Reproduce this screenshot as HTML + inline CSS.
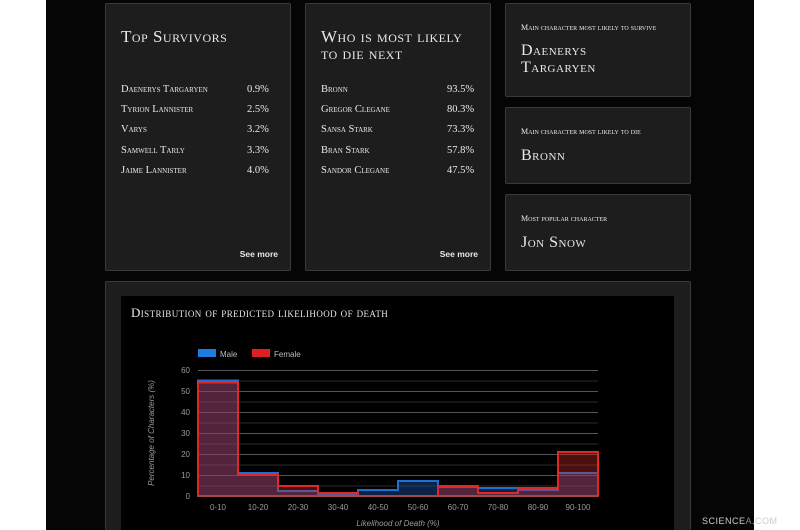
<!DOCTYPE html>
<html><head><style>
html,body{margin:0;width:800px;height:530px;overflow:hidden;}
body{background:#fff;position:relative;font-family:"Liberation Serif",serif;}
.page{position:absolute;left:46px;top:0;width:708px;height:530px;background:#050505;}
.card{position:absolute;background:#1d1d1d;border:1px solid #3a3a3a;border-radius:2px;color:#e8e8e8;box-sizing:border-box;}
h2{font-variant:small-caps;font-weight:normal;font-size:17px;margin:0;position:absolute;left:15px;top:24px;line-height:17px;letter-spacing:.5px;}
.row{position:absolute;left:15px;font-variant:small-caps;font-size:10.5px;width:150px;}
.row span{position:absolute;left:126px;}
.see{position:absolute;right:12px;bottom:11px;font-family:"Liberation Sans",sans-serif;font-weight:bold;font-size:8.5px;}
.sm{position:absolute;left:15px;font-variant:small-caps;font-size:8px;}
.big{position:absolute;left:15px;font-variant:small-caps;font-size:16px;line-height:17px;letter-spacing:.5px;}
</style></head><body>
<div class="page"></div>
<div class="card" style="left:105px;top:3px;width:186px;height:268px">
<h2>Top Survivors</h2>
<div class="row" style="top:80px">Daenerys Targaryen<span>0.9%</span></div>
<div class="row" style="top:100px">Tyrion Lannister<span>2.5%</span></div>
<div class="row" style="top:120px">Varys<span>3.2%</span></div>
<div class="row" style="top:141px">Samwell Tarly<span>3.3%</span></div>
<div class="row" style="top:161px">Jaime Lannister<span>4.0%</span></div>
<div class="see">See more</div></div>
<div class="card" style="left:305px;top:3px;width:186px;height:268px">
<h2>Who is most likely<br>to die next</h2>
<div class="row" style="top:80px">Bronn<span>93.5%</span></div>
<div class="row" style="top:100px">Gregor Clegane<span>80.3%</span></div>
<div class="row" style="top:120px">Sansa Stark<span>73.3%</span></div>
<div class="row" style="top:141px">Bran Stark<span>57.8%</span></div>
<div class="row" style="top:161px">Sandor Clegane<span>47.5%</span></div>
<div class="see">See more</div></div>
<div class="card" style="left:505px;top:3px;width:186px;height:94px">
<div class="sm" style="top:19px">Main character most likely to survive</div>
<div class="big" style="top:38px">Daenerys<br>Targaryen</div></div>
<div class="card" style="left:505px;top:107px;width:186px;height:77px">
<div class="sm" style="top:19px">Main character most likely to die</div>
<div class="big" style="top:39px">Bronn</div></div>
<div class="card" style="left:505px;top:194px;width:186px;height:77px">
<div class="sm" style="top:19px">Most popular character</div>
<div class="big" style="top:39px">Jon Snow</div></div>
<div class="card" style="left:105px;top:281px;width:586px;height:249px;border-bottom:none"></div>
<div style="position:absolute;left:121px;top:296px;width:553px;height:234px;background:#000"></div>
<svg style="position:absolute;left:0;top:0" width="800" height="530" font-family="Liberation Sans,sans-serif">
<text x="131" y="317" fill="#e8e8e8" font-family="Liberation Serif,serif" font-size="13" style="font-variant:small-caps" letter-spacing=".4">Distribution of predicted likelihood of death</text>
<rect x="198" y="349" width="18" height="8" fill="#1e7be0"/><text x="220" y="357" fill="#bbb" font-size="8">Male</text>
<rect x="252" y="349" width="18" height="8" fill="#e02020"/><text x="274" y="357" fill="#bbb" font-size="8">Female</text>
<g stroke="#555" stroke-width="1">
<line x1="198" x2="598" y1="370.5" y2="370.5"/><line x1="198" x2="598" y1="391.5" y2="391.5"/><line x1="198" x2="598" y1="412.5" y2="412.5"/><line x1="198" x2="598" y1="433.5" y2="433.5"/><line x1="198" x2="598" y1="454.5" y2="454.5"/><line x1="198" x2="598" y1="475.5" y2="475.5"/>
</g>
<g stroke="#2a2a2a"><line x1="198" x2="598" y1="381" y2="381"/><line x1="198" x2="598" y1="402" y2="402"/><line x1="198" x2="598" y1="423" y2="423"/><line x1="198" x2="598" y1="444" y2="444"/><line x1="198" x2="598" y1="465" y2="465"/><line x1="198" x2="598" y1="486" y2="486"/></g>
<g fill="#9a9a9a" font-size="8" text-anchor="end"><text x="190" y="373">60</text><text x="190" y="394">50</text><text x="190" y="415">40</text><text x="190" y="436">30</text><text x="190" y="457">20</text><text x="190" y="478">10</text><text x="190" y="499">0</text></g>
<path d="M198 496V380.5H238V473H278V491H318V494H358V490H398V481H438V487H478V488H518V490H558V473H598V496Z" fill="rgba(30,100,200,0.35)" stroke="#1e6fd0" stroke-width="2"/>
<path d="M198 496V382.5H238V475H278V486H318V493H358V496H438V486H478V493H518V488H558V452H598V496Z" fill="rgba(220,40,40,0.35)" stroke="#e02828" stroke-width="2"/>
<line x1="198" x2="598" y1="496" y2="496" stroke="#666"/>
<g fill="#9a9a9a" font-size="8" text-anchor="middle"><text x="218" y="510">0-10</text><text x="258" y="510">10-20</text><text x="298" y="510">20-30</text><text x="338" y="510">30-40</text><text x="378" y="510">40-50</text><text x="418" y="510">50-60</text><text x="458" y="510">60-70</text><text x="498" y="510">70-80</text><text x="538" y="510">80-90</text><text x="578" y="510">90-100</text></g>
<text x="398" y="526" fill="#9a9a9a" font-size="8" font-style="italic" text-anchor="middle">Likelihood of Death (%)</text>
<text transform="translate(154,433) rotate(-90)" fill="#9a9a9a" font-size="8" font-style="italic" text-anchor="middle">Percentage of Characters (%)</text>
<text x="702" y="524" fill="#ccc" font-size="9" letter-spacing=".5">SCIENCE<tspan fill="#888">A</tspan>.COM</text>
</svg>
</body></html>
